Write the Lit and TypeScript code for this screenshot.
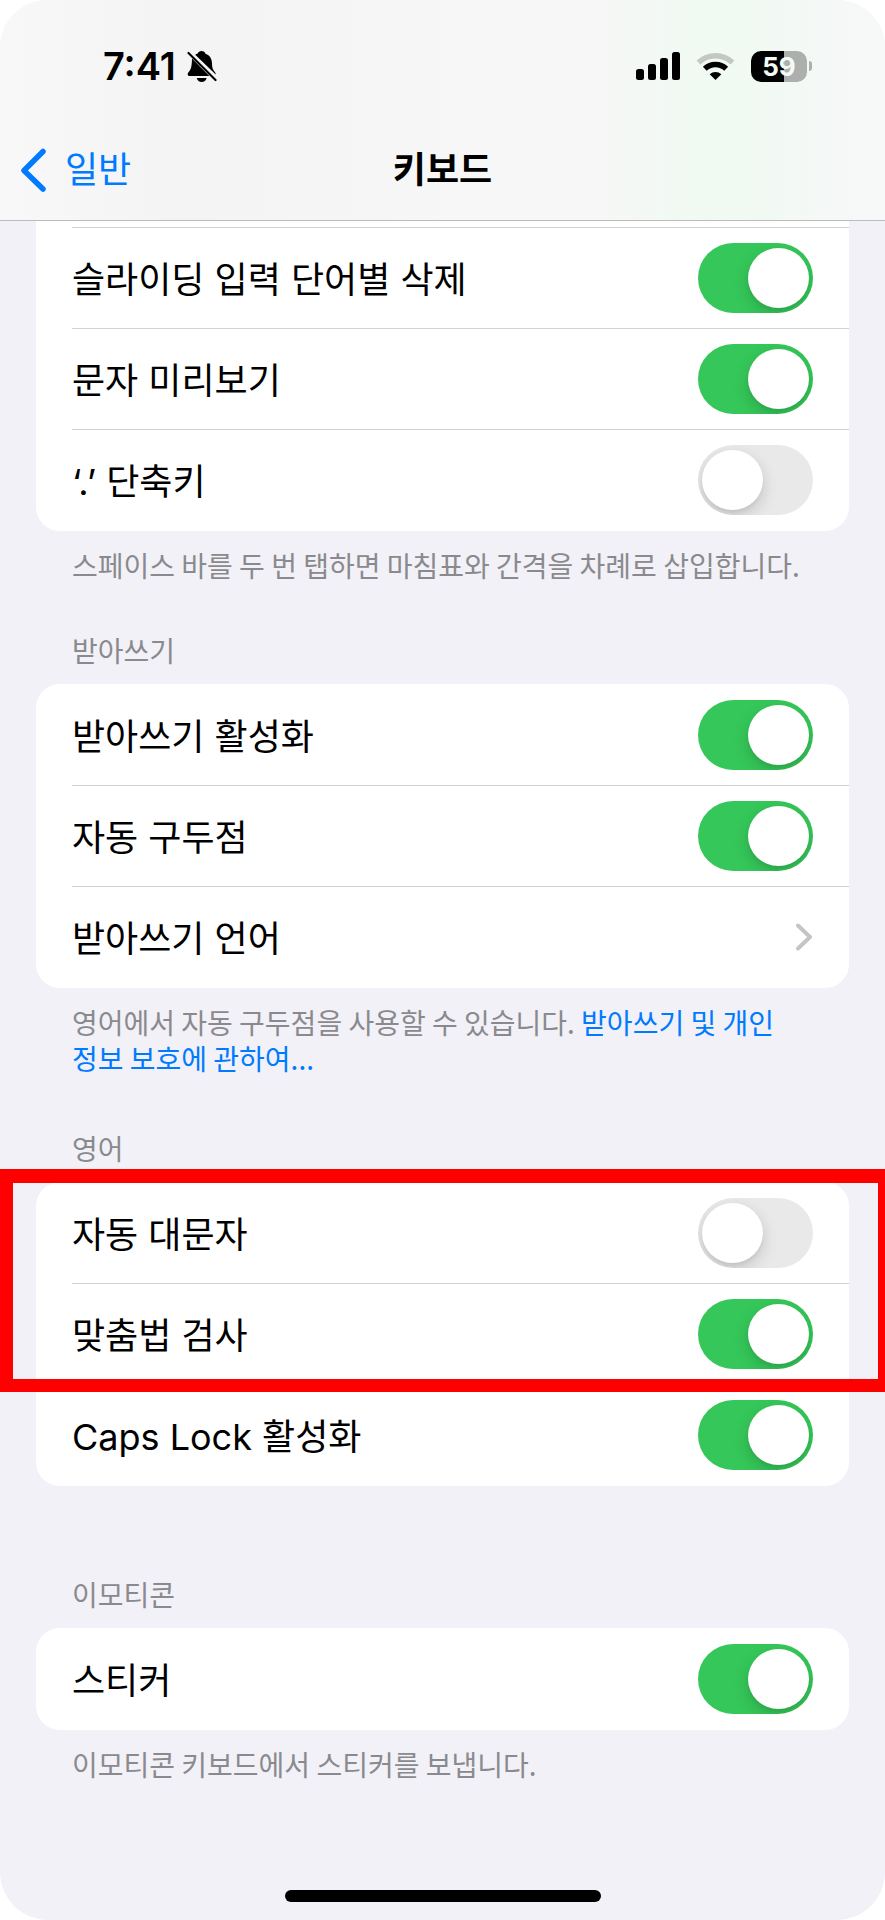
import { LitElement, html, css, svg, nothing } from "lit";
import { customElement, property } from "lit/decorators.js";

interface Row {
  label: string;
  on?: boolean;
  link?: boolean;
}

@customElement("settings-row")
class SettingsRow extends LitElement {
  @property() label = "";
  @property({ type: Boolean }) on = false;
  @property({ type: Boolean }) link = false;

  static styles = css`
    :host {
      display: block;
      padding-left: 36px;
    }
    .row {
      display: flex;
      align-items: center;
      justify-content: space-between;
      gap: 24px;
      box-sizing: border-box;
      min-height: 101px;
      padding-right: 36px;
      border-top: 1px solid var(--separator, transparent);
      color: #000;
      font-size: 36px;
      line-height: 48px;
      text-decoration: none;
    }
    .text {
      padding-top: 3px;
    }
    .toggle {
      appearance: none;
      flex: none;
      width: 115px;
      height: 70px;
      margin: 0;
      padding: 5px 4px;
      box-sizing: border-box;
      border-radius: 35px;
      background: #e9e9ea;
      overflow: hidden;
      display: flex;
    }
    .toggle::before {
      content: "";
      width: 61px;
      height: 60px;
      border-radius: 50%;
      background: #fff;
      box-shadow: 0 6px 16px rgba(0, 0, 0, 0.16), 0 3px 3px rgba(0, 0, 0, 0.04);
    }
    .toggle:checked {
      background: #35c759;
      justify-content: flex-end;
    }
    .chevron {
      flex: none;
      width: 17px;
      height: 28px;
    }
  `;

  render() {
    if (this.link) {
      return html`<a class="row" href="#">
        <span class="text">${this.label}</span>
        <svg class="chevron" viewBox="0 0 17 28" fill="none" stroke="#c5c5c7" stroke-width="4" stroke-linecap="round" stroke-linejoin="round" aria-hidden="true">
          <path d="M2 2.5 14 14 2 25.5" />
        </svg>
      </a>`;
    }
    return html`<label class="row">
      <span class="text">${this.label}</span>
      <input class="toggle" type="checkbox" role="switch" .checked=${this.on} />
    </label>`;
  }
}

const typing: Row[] = [
  { label: "슬라이딩 입력 단어별 삭제", on: true },
  { label: "문자 미리보기", on: true },
  { label: "‘.’ 단축키" },
];
const dictation: Row[] = [
  { label: "받아쓰기 활성화", on: true },
  { label: "자동 구두점", on: true },
  { label: "받아쓰기 언어", link: true },
];
const english: Row[] = [
  { label: "자동 대문자" },
  { label: "맞춤법 검사", on: true },
  { label: "Caps Lock 활성화", on: true },
];
const emoji: Row[] = [{ label: "스티커", on: true }];

const bell = svg`
  <path d="M14.5 1c2 0 3.500 1 4 2.700 4.500 1.600 6.500 5.300 6.500 9.800 0 4.500 1 6.500 3 8.700.7.800.9 1.500.7 2.300L8.200 4.800C9 4.300 9.800 3.900 10.700 3.600 11.200 2 12.600 1 14.500 1z" />
  <path d="M5 8.500 22.300 26H2.800C.4 26 .2 23.600 1.500 22.200 4 19.500 4.800 17 5 8.500z" />
  <path d="M9.800 28h9.800c-.5 2.400-2.500 4-4.900 4s-4.400-1.600-4.900-4z" />
  <path d="M1.500 3 28.500 30" stroke="#000" stroke-width="2.200" stroke-linecap="round" />`;

@customElement("app-root")
class AppRoot extends LitElement {
  static styles = css`
    :host {
      display: block;
      background: #fff;
      font-family: Inter, "Noto Sans CJK KR", sans-serif;
      color: #000;
      word-break: keep-all;
    }
    .screen {
      display: flex;
      flex-direction: column;
      min-height: 100vh;
      border-radius: 48px;
      overflow: hidden;
      background: #f2f1f7;
    }
    .top {
      border-bottom: 1px solid #bcbcbe;
      background: linear-gradient(90deg, #f8f8f8 0, #f4f4f4 20%, #f7f7f7 55%, #f6f7f6 68%, #f0faf2 80%, #f1f9f3 86%, #f7f8f8 97%);
    }
    .status {
      display: flex;
      align-items: center;
      justify-content: space-between;
      height: 36px;
      padding: 48px 73px 0 103px;
    }
    .clock,
    .signals {
      display: flex;
      align-items: center;
    }
    .clock {
      gap: 11px;
      font-size: 38px;
      line-height: 36px;
      font-weight: 600;
    }
    .signals {
      gap: 16px;
    }
    .bell {
      width: 30px;
      height: 33px;
    }
    .cell {
      width: 44px;
      height: 30px;
    }
    .wifi {
      width: 39px;
      height: 30px;
    }
    .battery {
      display: flex;
      align-items: center;
      gap: 2px;
    }
    .charge {
      width: 56px;
      height: 31px;
      border-radius: 10px;
      background: linear-gradient(90deg, #000 59%, #adafae 59%);
      color: #f4fbf5;
      font-size: 26px;
      line-height: 31px;
      font-weight: 700;
      text-align: center;
    }
    .cap {
      width: 3px;
      height: 10px;
      border-radius: 0 5px 5px 0;
      background: #adafae;
    }
    .nav {
      display: grid;
      grid-template-columns: 1fr auto 1fr;
      align-items: center;
      height: 100px;
      margin-top: 36px;
      padding: 0 20px;
    }
    .back {
      display: flex;
      align-items: center;
      gap: 18px;
      color: #007aff;
      font-size: 36px;
      line-height: 48px;
      text-decoration: none;
    }
    .back svg {
      width: 27px;
      height: 44px;
    }
    .title {
      margin: 0;
      font-size: 36px;
      line-height: 48px;
      font-weight: 600;
    }
    .section {
      padding: 0 36px;
    }
    .section + .section {
      margin-top: 49px;
    }
    .section + .section.after-note {
      margin-top: 54px;
    }
    .section + .section.apart {
      margin-top: 90px;
    }
    .heading,
    .note {
      margin: 0;
      padding: 0 36px;
      font-family: "Noto Sans CJK KR", sans-serif;
      font-size: 28px;
      line-height: 36px;
      font-weight: 400;
      color: #8a8a8e;
    }
    .heading {
      padding-bottom: 16px;
    }
    .note {
      padding-top: 16px;
    }
    .note a {
      color: #007aff;
      text-decoration: none;
    }
    .card {
      position: relative;
      padding-bottom: 1px;
      border-radius: 24px;
      background: #fff;
    }
    .card.scrolled {
      padding-top: 6px;
      border-radius: 0 0 24px 24px;
    }
    .card settings-row + settings-row,
    .card.scrolled settings-row {
      --separator: #d2d2d4;
    }
    .marker {
      position: absolute;
      top: -13px;
      left: -36px;
      right: -36px;
      height: 223px;
      box-sizing: border-box;
      border: solid #f00;
      border-width: 14px 7px 13px 13px;
      pointer-events: none;
    }
    .home {
      width: 316px;
      max-width: 60%;
      height: 12px;
      margin: auto auto 18px;
      border-radius: 6px;
      background: #000;
    }
  `;

  rows(items: Row[]) {
    return items.map(
      (r) => html`<settings-row .label=${r.label} .on=${!!r.on} .link=${!!r.link}></settings-row>`
    );
  }

  section(title: string, items: Row[], cls = "", note: unknown = nothing, marked = false) {
    return html`<section class="section ${cls}">
      <h2 class="heading">${title}</h2>
      <div class="card">${this.rows(items)}${marked ? html`<div class="marker"></div>` : nothing}</div>
      ${note === nothing ? nothing : html`<p class="note">${note}</p>`}
    </section>`;
  }

  render() {
    return html`<div class="screen">
      <header class="top">
        <div class="status">
          <div class="clock">
            <span>7:41</span>
            <svg class="bell" viewBox="0 0 30 33" aria-hidden="true">${bell}</svg>
          </div>
          <div class="signals">
            <svg class="cell" viewBox="0 0 44 30" aria-hidden="true">
              <rect x="0" y="18" width="8" height="11" rx="2.500" />
              <rect x="12" y="13" width="8" height="16" rx="2.500" />
              <rect x="24" y="7" width="8" height="22" rx="2.500" />
              <rect x="36" y="1" width="8" height="28" rx="2.500" />
            </svg>
            <svg class="wifi" viewBox="0 0 39 30" fill="none" aria-hidden="true">
              <path d="M2.500 11.500a24.500 24.500 0 0 1 34 0" stroke="#c3c8c4" stroke-width="5.500" />
              <path d="M8.800 17.800a15.500 15.500 0 0 1 21.400 0" stroke="#000" stroke-width="5.500" />
              <path d="M19.500 29 13.700 23.200a8.500 8.500 0 0 1 11.600 0z" fill="#000" />
            </svg>
            <div class="battery">
              <div class="charge">59</div>
              <div class="cap"></div>
            </div>
          </div>
        </div>
        <nav class="nav">
          <a class="back" href="#">
            <svg viewBox="0 0 27 44" fill="none" stroke="#007aff" stroke-width="5.500" stroke-linecap="round" stroke-linejoin="round" aria-hidden="true">
              <path d="M23 3.500 4 22.500 23 41" />
            </svg>
            <span>일반</span>
          </a>
          <h1 class="title">키보드</h1>
        </nav>
      </header>
      <section class="section">
        <div class="card scrolled">${this.rows(typing)}</div>
        <p class="note">스페이스 바를 두 번 탭하면 마침표와 간격을 차례로 삽입합니다.</p>
      </section>
      ${this.section("받아쓰기", dictation, "", html`영어에서 자동 구두점을 사용할 수 있습니다. <a href="#">받아쓰기 및 개인 정보 보호에 관하여...</a>`)}
      ${this.section("영어", english, "after-note", nothing, true)}
      ${this.section("이모티콘", emoji, "apart", "이모티콘 키보드에서 스티커를 보냅니다.")}
      <div class="home"></div>
    </div>`;
  }
}
